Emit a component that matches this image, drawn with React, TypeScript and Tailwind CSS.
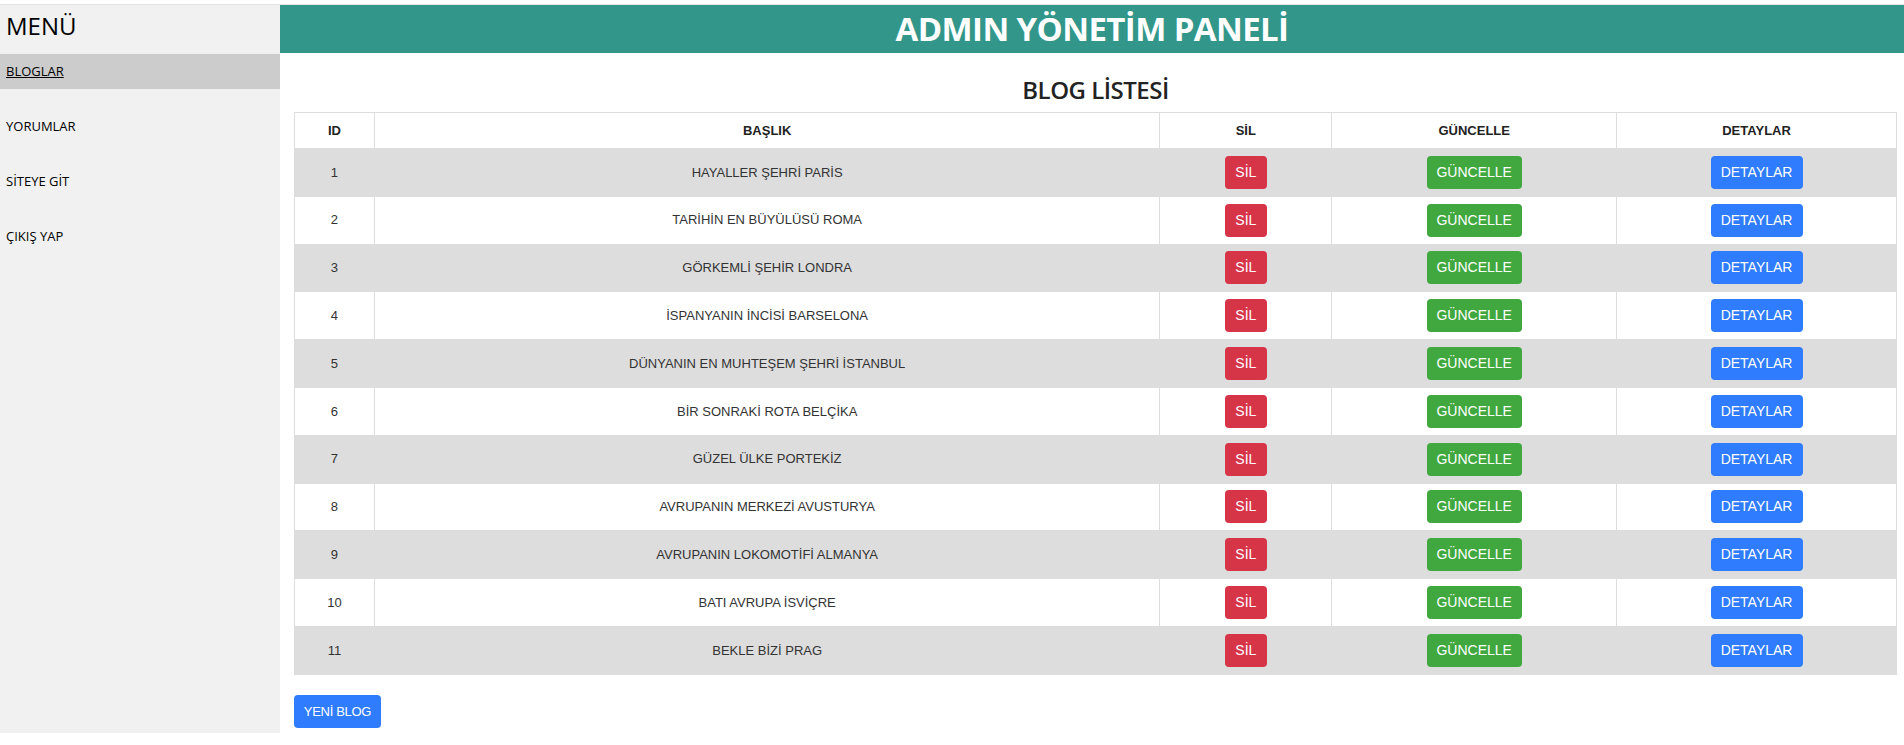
import React from 'react';

const blogs = [
  { id: 1, title: 'HAYALLER ŞEHRİ PARİS' },
  { id: 2, title: 'TARİHİN EN BÜYÜLÜSÜ ROMA' },
  { id: 3, title: 'GÖRKEMLİ ŞEHİR LONDRA' },
  { id: 4, title: 'İSPANYANIN İNCİSİ BARSELONA' },
  { id: 5, title: 'DÜNYANIN EN MUHTEŞEM ŞEHRİ İSTANBUL' },
  { id: 6, title: 'BİR SONRAKİ ROTA BELÇİKA' },
  { id: 7, title: 'GÜZEL ÜLKE PORTEKİZ' },
  { id: 8, title: 'AVRUPANIN MERKEZİ AVUSTURYA' },
  { id: 9, title: 'AVRUPANIN LOKOMOTİFİ ALMANYA' },
  { id: 10, title: 'BATI AVRUPA İSVİÇRE' },
  { id: 11, title: 'BEKLE BİZİ PRAG' },
];

const menu = ['BLOGLAR', 'YORUMLAR', 'SİTEYE GİT', 'ÇIKIŞ YAP'];

const segoe = { fontFamily: '"Open Sans", "Noto Sans", sans-serif' };
const arial = { fontFamily: '"Liberation Sans", Arial, sans-serif' };

function Btn({ label, color, width }: { label: string; color: string; width: string }) {
  return (
    <a
      href="#"
      className={`mx-auto flex h-[33px] items-center justify-center rounded-[4px] text-[14px] text-white ${color} ${width}`}
    >
      {label}
    </a>
  );
}

export default function App() {
  return (
    <div className="h-[745px] overflow-hidden bg-white">
      <div className="h-[4px]" />
      <div className="flex h-[730px] overflow-hidden border-t border-[#e4e4e4]">
        {/* sidebar */}
        <aside className="h-[728px] w-[280px] shrink-0 bg-[#f1f1f1]" style={segoe}>
          <div className="h-[49px] px-[6px] pt-[6px] text-[24px] font-medium leading-[30px] text-black">MENÜ</div>
          <nav className="flex flex-col gap-[20px]">
            {menu.map((item, i) => (
              <a
                key={item}
                href="#"
                className={`flex h-[35px] items-center px-[6px] text-[13px] text-black ${
                  i === 0 ? 'bg-[#cccccc] underline' : ''
                }`}
              >
                {item}
              </a>
            ))}
          </nav>
        </aside>

        {/* main */}
        <main className="min-w-0 flex-1">
          <header className="flex h-[48px] items-center justify-center bg-[#32968a]">
            <h1 className="text-[33px] font-bold tracking-[-0.6px] text-white" style={segoe}>
              ADMIN YÖNETİM PANELİ
            </h1>
          </header>

          <div className="pl-[14px] pr-[7px]">
            <h2
              className="mt-[19px] mb-[4px] text-center text-[24px] font-semibold leading-[36px] tracking-[-0.5px] text-[#222]"
              style={segoe}
            >
              BLOG LİSTESİ
            </h2>

            <table className="w-full border-collapse text-center text-[13px] text-[#333]" style={arial}>
              <thead>
                <tr className="h-[36px]">
                  <th className="w-[80px] border border-[#dddddd] font-bold text-[#222]">ID</th>
                  <th className="w-[786px] border border-[#dddddd] font-bold text-[#222]">BAŞLIK</th>
                  <th className="w-[172px] border border-[#dddddd] font-bold text-[#222]">SİL</th>
                  <th className="w-[285px] border border-[#dddddd] font-bold text-[#222]">GÜNCELLE</th>
                  <th className="w-[280px] border border-[#dddddd] font-bold text-[#222]">DETAYLAR</th>
                </tr>
              </thead>
              <tbody>
                {blogs.map((b, i) => (
                  <tr key={b.id} className={`h-[47.8px] ${i % 2 === 0 ? 'bg-[#dddddd]' : 'bg-white'}`}>
                    <td className="border border-[#dddddd]">{b.id}</td>
                    <td className="border border-[#dddddd]">{b.title}</td>
                    <td className="border border-[#dddddd]">
                      <Btn label="SİL" color="bg-[#d63447]" width="w-[42px]" />
                    </td>
                    <td className="border border-[#dddddd]">
                      <Btn label="GÜNCELLE" color="bg-[#40a83f]" width="w-[95px]" />
                    </td>
                    <td className="border border-[#dddddd]">
                      <Btn label="DETAYLAR" color="bg-[#2f7cfe]" width="w-[92px]" />
                    </td>
                  </tr>
                ))}
              </tbody>
            </table>

            <a
              href="#"
              className="mt-[20px] flex h-[33px] w-[87px] items-center justify-center rounded-[4px] bg-[#2f7cfe] text-[13px] tracking-[-0.3px] text-white"
              style={arial}
            >
              YENİ BLOG
            </a>

            <div className="mt-[3px] pl-[572px] text-[13px] text-[#2f6fe8]" style={arial}>
              Tüm hakları saklıdır © 2021
            </div>
          </div>
        </main>
      </div>
    </div>
  );
}
